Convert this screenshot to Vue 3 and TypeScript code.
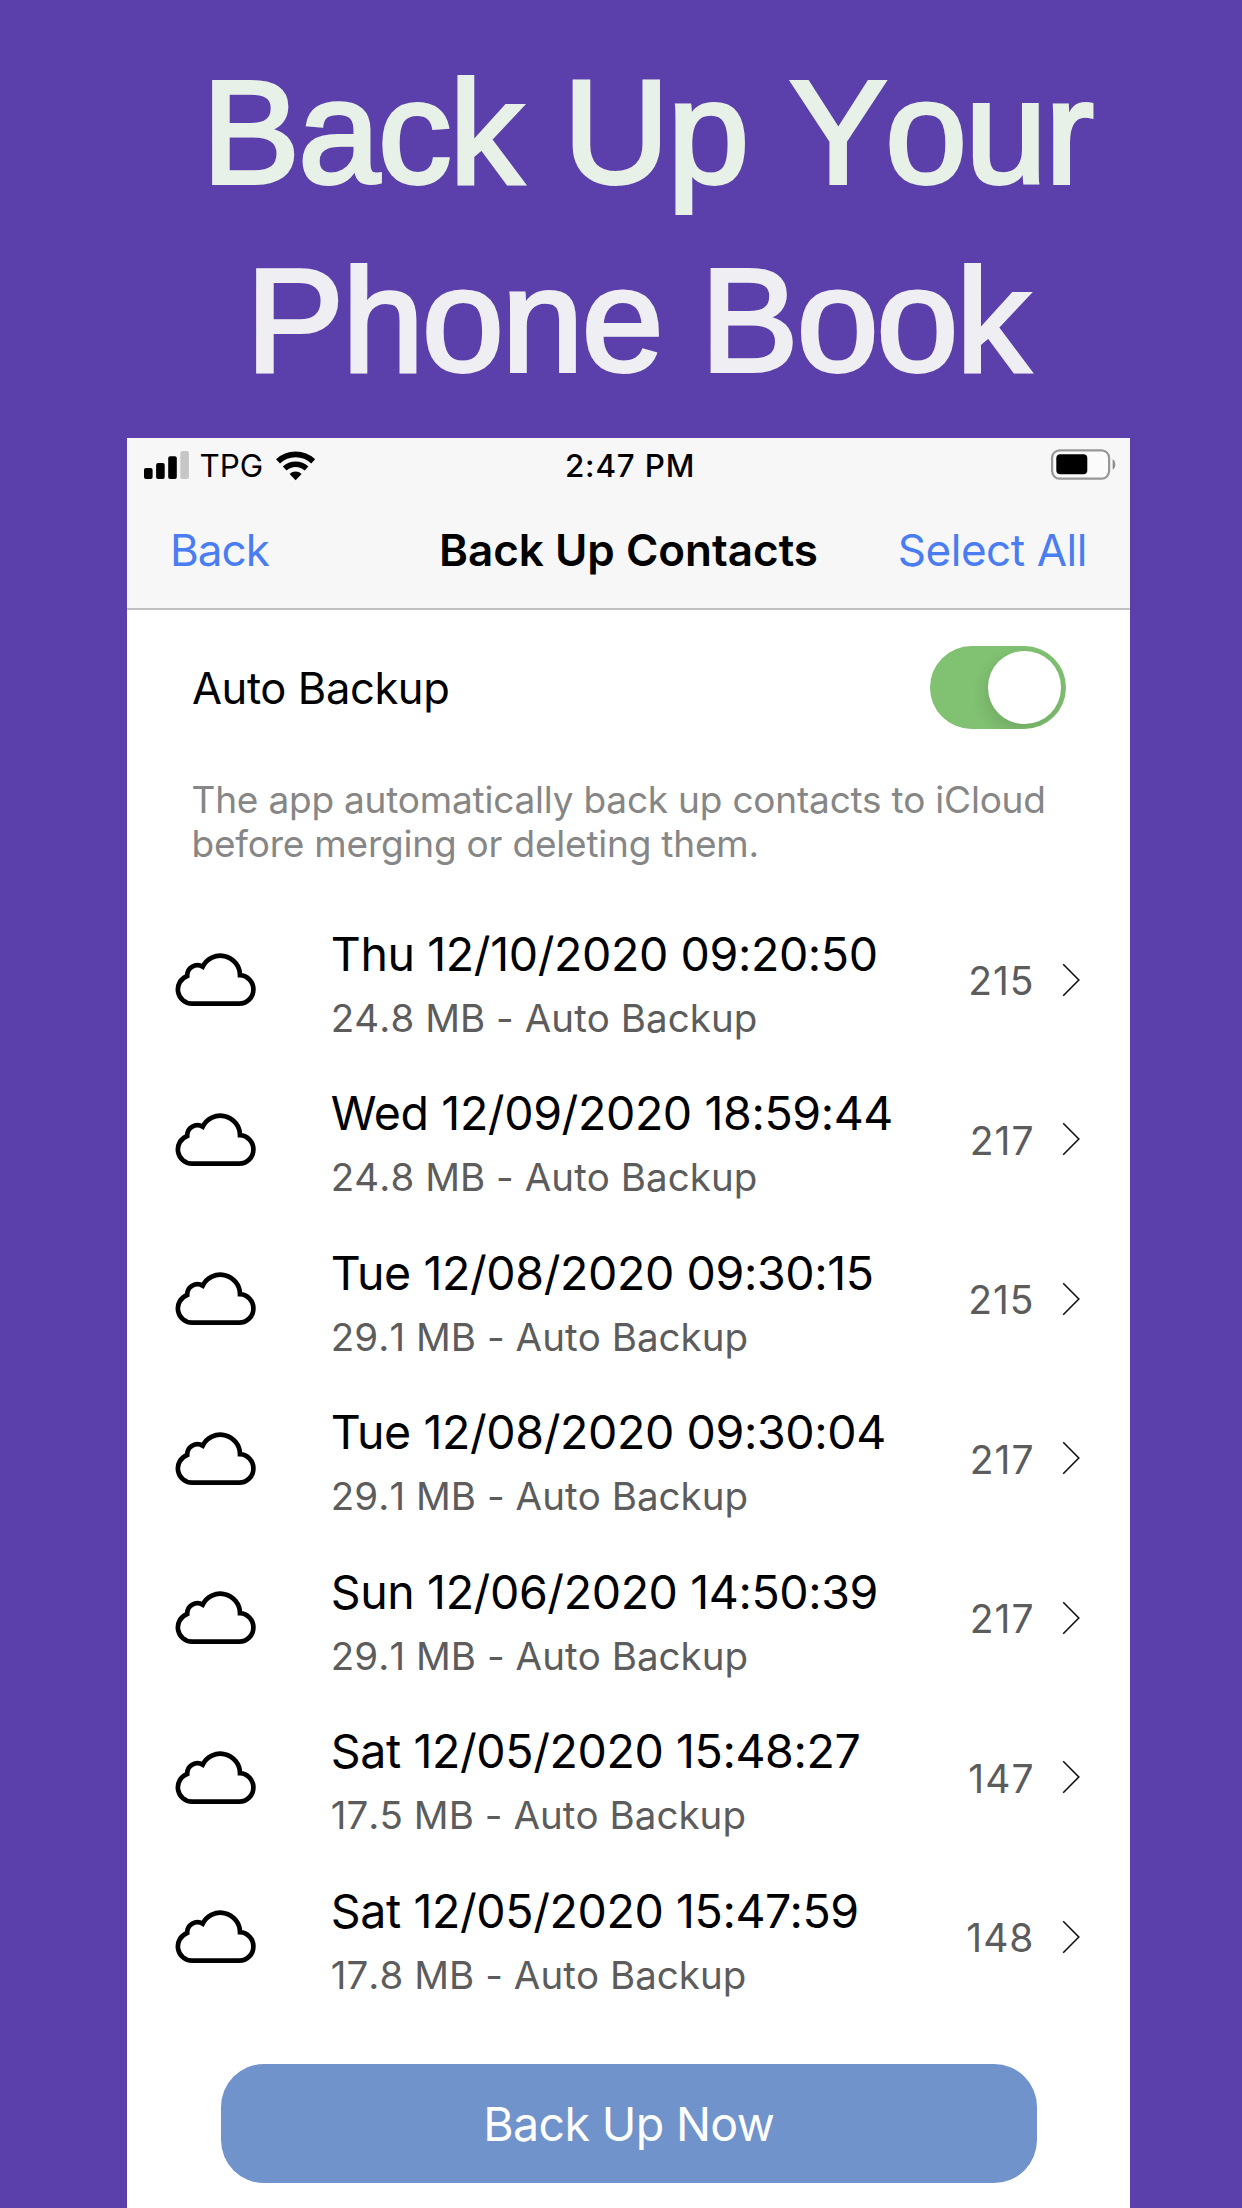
<script setup lang="ts">
interface Backup {
  date: string
  size: string
  count: number
}

const backups: Backup[] = [
  { date: 'Thu 12/10/2020 09:20:50', size: '24.8 MB', count: 215 },
  { date: 'Wed 12/09/2020 18:59:44', size: '24.8 MB', count: 217 },
  { date: 'Tue 12/08/2020 09:30:15', size: '29.1 MB', count: 215 },
  { date: 'Tue 12/08/2020 09:30:04', size: '29.1 MB', count: 217 },
  { date: 'Sun 12/06/2020 14:50:39', size: '29.1 MB', count: 217 },
  { date: 'Sat 12/05/2020 15:48:27', size: '17.5 MB', count: 147 },
  { date: 'Sat 12/05/2020 15:47:59', size: '17.8 MB', count: 148 },
]
</script>

<template>
  <main class="poster">
    <h1 class="headline">
      <span class="headline-top">Back Up Your</span>
      <span class="headline-bottom">Phone Book</span>
    </h1>

    <section class="phone">
      <div class="status">
        <div class="status-left">
          <svg class="signal" width="45" height="28" viewBox="0 0 45 28">
            <rect x="0" y="17" width="8.6" height="11" rx="2" />
            <rect x="12.1" y="12" width="8.6" height="16" rx="2" />
            <rect x="24.2" y="5.3" width="8.6" height="22.7" rx="2" />
            <rect x="36.3" y="0" width="8.6" height="28" rx="2" fill="#c6c6c6" />
          </svg>
          <span class="carrier">TPG</span>
          <svg class="wifi" width="40" height="30" viewBox="0 0 40 30">
            <g fill="none" stroke="#000">
              <path d="M2 10.3A25.8 25.8 0 0 1 37.2 10.3" stroke-width="5.8" />
              <path d="M8.7 17.5A15.9 15.9 0 0 1 30.5 17.5" stroke-width="5.4" />
            </g>
            <path d="M13.6 23A8.5 8.5 0 0 1 25.6 23L19.6 29.2Z" />
          </svg>
        </div>
        <span class="time">2:47 PM</span>
        <div class="status-right">
          <svg width="65" height="31" viewBox="0 0 65 31">
            <rect x="1.1" y="1.3" width="57" height="28.3" rx="7.5" fill="#fbfbfb" stroke="#989898" stroke-width="2.2" />
            <rect x="5.3" y="5.2" width="31" height="20" rx="4" />
            <path d="M61.6 10.2Q64.3 11.5 64.3 15.4T61.6 20.6Z" fill="#8f8f8f" />
          </svg>
        </div>
      </div>

      <nav class="nav">
        <a class="nav-back">Back</a>
        <strong class="nav-title">Back Up Contacts</strong>
        <a class="nav-select">Select All</a>
      </nav>

      <div class="auto">
        <span>Auto Backup</span>
        <div class="switch"><div class="knob"></div></div>
      </div>

      <p class="note">The app automatically back up contacts to iCloud<br />before merging or deleting them.</p>

      <ul class="list">
        <li v-for="b in backups" :key="b.date" class="row">
          <svg class="cloud" width="81" height="54" viewBox="0 0 81 54">
            <path
              d="M17 50.7H64.1A14.3 14.3 0 0 0 78.4 36.4A14.3 14.3 0 0 0 65 22.2A19.7 19.7 0 0 0 27.7 13.6A10.3 10.3 0 0 0 12.2 23A14.3 14.3 0 0 0 17 50.7Z"
              fill="none"
              stroke="#000"
              stroke-width="4.7"
            />
          </svg>
          <div class="info">
            <span class="date">{{ b.date }}</span>
            <span class="detail">{{ b.size }} - Auto Backup</span>
          </div>
          <span class="count">{{ b.count }}</span>
          <svg class="chevron" width="18" height="34" viewBox="0 0 18 34">
            <path d="M1.2 1.2L16.8 17L1.2 32.8" fill="none" stroke="#111" stroke-width="1.6" />
          </svg>
        </li>
      </ul>

      <button class="primary" type="button">Back Up Now</button>
    </section>
  </main>
</template>

<style>
body {
  background: #5b3fab;
}
</style>

<style scoped>
.poster {
  box-sizing: border-box;
  width: 1242px;
  height: 2208px;
  overflow: hidden;
  display: flex;
  flex-direction: column;
  padding-top: 39px;
  background: #5b3fab;
}

.headline {
  margin: 0;
  height: 399px;
  flex: none;
  display: flex;
  flex-direction: column;
  font: 400 147px "Liberation Sans", Arial, sans-serif;
  line-height: 187.5px;
  font-kerning: none;
  white-space: nowrap;
}

.headline-top {
  padding-left: 202px;
  letter-spacing: -1.9px;
  word-spacing: 3px;
  color: #e8f1e8;
  -webkit-text-stroke: 3.8px #e8f1e8;
}

.headline-bottom {
  padding-left: 246px;
  letter-spacing: -1.9px;
  color: #efeff3;
  -webkit-text-stroke: 3.8px #efeff3;
}

.phone {
  flex: 1;
  display: flex;
  flex-direction: column;
  width: 1003px;
  margin-left: 127px;
  background: #fff;
  color: #000;
  font-family: Inter, "Noto Sans", sans-serif;
  white-space: nowrap;
}

.status {
  flex: none;
  display: grid;
  grid-template-columns: 1fr auto 1fr;
  align-items: center;
  height: 54px;
  padding: 0 14px 0 17px;
  background: #f7f7f7;
  font-size: 31.4px;
  line-height: 54px;
}

.status svg {
  display: block;
}

.status-left {
  display: flex;
  align-items: center;
}

.signal {
  margin-bottom: 2px;
}

.carrier {
  margin: 0 13px 0 10.5px;
  padding-top: 1px;
}

.time {
  padding-top: 1px;
  font-weight: 500;
  letter-spacing: 0.8px;
}

.status-right {
  display: flex;
  justify-content: flex-end;
  padding-bottom: 2px;
}

.nav {
  flex: none;
  display: grid;
  grid-template-columns: 1fr auto 1fr;
  align-items: center;
  height: 116px;
  padding: 0 43px 0 43px;
  background: #f7f7f7;
  border-bottom: 2px solid #c0c0c0;
  font-size: 44px;
}

.nav-back,
.nav-select {
  color: #4a7df2;
}

.nav-back {
  letter-spacing: -1px;
}

.nav-select {
  text-align: right;
  letter-spacing: -0.45px;
}

.nav-title {
  font-weight: 600;
}

.auto {
  flex: none;
  display: flex;
  align-items: center;
  justify-content: space-between;
  height: 155px;
  padding: 0 64px 0 65px;
  font-size: 43.5px;
  letter-spacing: -0.4px;
}

.switch {
  box-sizing: border-box;
  display: flex;
  align-items: center;
  justify-content: flex-end;
  width: 136.5px;
  height: 82.6px;
  padding-right: 5.3px;
  border-radius: 42px;
  background: #81c172;
  overflow: hidden;
}

.knob {
  width: 72.4px;
  height: 72.4px;
  border-radius: 50%;
  background: #fff;
  box-shadow: -2px 7px 16px rgba(0, 0, 0, 0.12);
}

.note {
  flex: none;
  margin: 13px 0 0 64.5px;
  font-size: 37px;
  line-height: 44px;
  letter-spacing: -0.21px;
  color: #868686;
}

.list {
  flex: none;
  margin: 35px 0 0;
  padding: 0;
  list-style: none;
}

.row {
  display: flex;
  align-items: center;
  height: 159.5px;
  padding: 0 50px 0 47.8px;
}

.row svg {
  flex: none;
  display: block;
}

.cloud {
  margin-right: 75px;
  margin-bottom: 1px;
}

.info {
  flex: 1;
  display: flex;
  flex-direction: column;
  padding-top: 10px;
}

.date {
  font-size: 46.5px;
  line-height: 64px;
  letter-spacing: -0.39px;
}

.detail {
  font-size: 38.5px;
  line-height: 64px;
  letter-spacing: 0.05px;
  font-kerning: none;
  color: #5c5c5c;
}

.count {
  margin-right: 27.5px;
  font-size: 39px;
  letter-spacing: 1px;
  color: #5c5c5c;
}

.chevron {
  margin-bottom: 2.5px;
}

.primary {
  flex: none;
  width: 816px;
  height: 119.4px;
  margin: 46px 0 0 93.7px;
  padding: 1px 0 0;
  border: 0;
  border-radius: 43px;
  background: #7093cb;
  color: #fff;
  font: 400 46.5px Inter, "Noto Sans", sans-serif;
  letter-spacing: -0.65px;
}
</style>
